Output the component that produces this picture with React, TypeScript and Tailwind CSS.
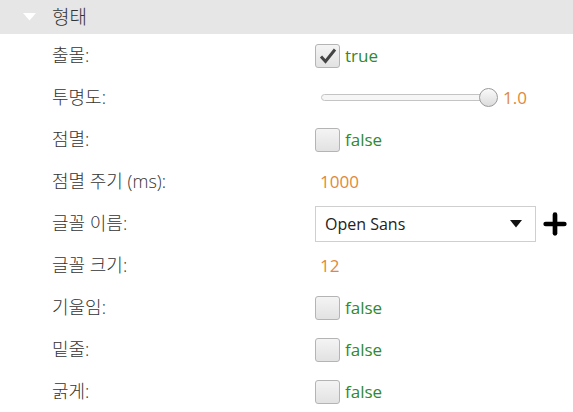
import { Plus } from "lucide-react";

const font = { fontFamily: '"Open Sans", "Noto Sans CJK KR", sans-serif' };

function Check({ checked }: { checked: boolean }) {
  return (
    <span className="flex h-[24px] w-[25px] shrink-0 items-center justify-center rounded-[3px] border border-[#b4b4b4] bg-gradient-to-b from-[#f4f4f4] to-[#e2e2e2]">
      {checked && (
        <svg width="18" height="16" viewBox="0 0 18 16">
          <path d="M2 8.5 L6.5 13.5 L16 1.5" fill="none" stroke="#444" strokeWidth="3" />
        </svg>
      )}
    </span>
  );
}

function BoolValue({ v }: { v: boolean }) {
  return (
    <div className="flex items-center gap-[5px]">
      <Check checked={v} />
      <span className="text-[17px] text-[#2f8a2f]">{v ? "true" : "false"}</span>
    </div>
  );
}

function Row({ label, children }: { label: string; children: React.ReactNode }) {
  return (
    <div className="flex h-[42px] items-center pt-[1px]">
      <div className="w-[315px] pl-[52px] text-[18px] font-light text-[#333]">{label}</div>
      <div className="flex flex-1 items-center">{children}</div>
    </div>
  );
}

export default function App() {
  return (
    <div className="h-[412px] w-[573px] overflow-hidden bg-white" style={font}>
      <div className="flex h-[34px] items-center bg-[#e6e6e6]">
        <svg className="ml-[23px]" width="13" height="8" viewBox="0 0 13 8">
          <path d="M0 0 H13 L6.5 7.5 Z" fill="#fff" />
        </svg>
        <span className="ml-[16px] text-[19px] font-light text-[#333]">형태</span>
      </div>
      <Row label="출몰:">
        <BoolValue v={true} />
      </Row>
      <Row label="투명도:">
        <div className="ml-[6px] flex items-center">
          <div className="h-[7px] w-[166px] rounded-full border border-[#c4c4c4] bg-[#f6f6f6]" />
          <div className="-ml-[8px] h-[19px] w-[19px] rounded-full border border-[#9a9a9a] bg-gradient-to-b from-[#fafafa] to-[#dcdcdc]" />
          <span className="ml-[5px] text-[17px] text-[#e0893d]">1.0</span>
        </div>
      </Row>
      <Row label="점멸:">
        <BoolValue v={false} />
      </Row>
      <Row label="점멸 주기 (ms):">
        <span className="pl-[5px] text-[17px] text-[#e0893d]">1000</span>
      </Row>
      <Row label="글꼴 이름:">
        <div className="flex h-[36px] w-[221px] items-center justify-between border border-[#cfcfcf] bg-white pl-[9px] pr-[13px]">
          <span className="text-[16px] text-[#222]">Open Sans</span>
          <svg width="12" height="8" viewBox="0 0 12 8">
            <path d="M0 0 H12 L6 7.5 Z" fill="#111" />
          </svg>
        </div>
        <Plus className="ml-[3px] h-[32px] w-[32px] text-black" strokeWidth={3.5} absoluteStrokeWidth />
      </Row>
      <Row label="글꼴 크기:">
        <span className="pl-[5px] text-[17px] text-[#e0893d]">12</span>
      </Row>
      <Row label="기울임:">
        <BoolValue v={false} />
      </Row>
      <Row label="밑줄:">
        <BoolValue v={false} />
      </Row>
      <Row label="굵게:">
        <BoolValue v={false} />
      </Row>
    </div>
  );
}
